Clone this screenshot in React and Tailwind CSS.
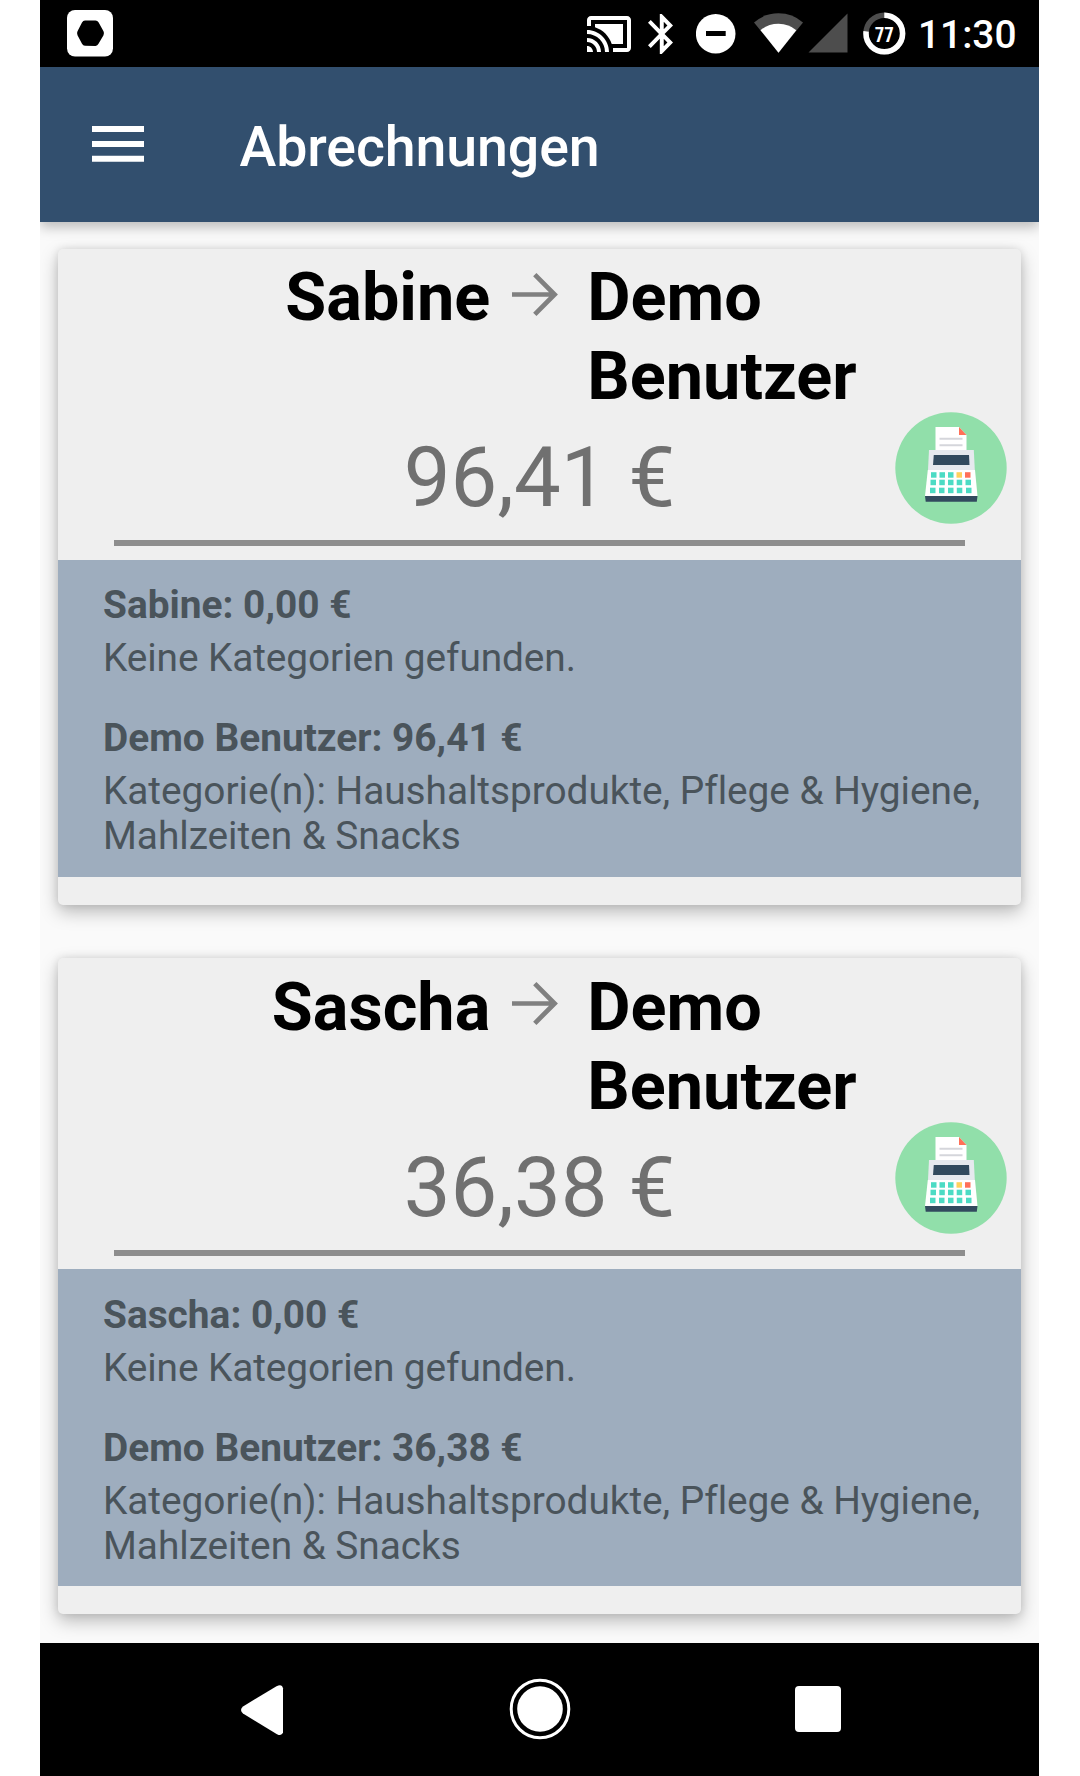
import React from "react";

const settlements = [
  { from: "Sabine", to: "Demo Benutzer", amount: "96,41 €" },
  { from: "Sascha", to: "Demo Benutzer", amount: "36,38 €" },
];

function StatusBar() {
  return (
    <div className="flex h-[66.5px] shrink-0 items-start bg-black">
      <svg className="mt-[10px] ml-[27px] h-[47px] w-[46px]" viewBox="0 0 46 47">
        <rect width="46" height="46.5" rx="8" fill="#fff" />
        <path d="M18 10.500h10.500q2 0 3 1.700l5 9q1 2 0 4l-5 8.500q-1 2-3 2.200l-10.500-.2q-2 0-3-2l-4.500-8.500q-1-2 0-4l4.500-8.800q1-1.900 3-1.900z" fill="#000" />
      </svg>
      <svg className="mt-[12px] ml-[471.5px] h-[44px] w-[48px]" viewBox="0 0 24 22" fill="#fff">
        <path d="M21 2H3c-1.100 0-2 .9-2 2v3h2V4h18v14h-7v2h7c1.100 0 2-.9 2-2V4c0-1.100-.9-2-2-2zM1 17v3h3c0-1.660-1.340-3-3-3zm0-4v2c2.760 0 5 2.240 5 5h2c0-3.870-3.130-7-7-7zm0-4v2c4.970 0 9 4.030 9 9h2c0-6.080-4.930-11-11-11z" />
        <path d="M5 6v1.630c3.960 1.280 7.090 4.410 8.370 8.370H19V6z" />
      </svg>
      <svg className="mt-[14px] ml-[15.5px] h-[40px] w-[25px]" viewBox="5 2 12.710 20" preserveAspectRatio="none" fill="#fff">
        <path d="M17.710 7.710L12 2h-1v7.590L6.410 5 5 6.410 10.590 12 5 17.590 6.410 19 11 14.410V22h1l5.710-5.710-4.300-4.290 4.300-4.290zM13 5.830l1.880 1.880L13 9.590V5.830zm1.880 10.460L13 18.170v-3.760l1.880 1.880z" />
      </svg>
      <svg className="mt-[14px] ml-[23px] h-[40px] w-[40px]" viewBox="0 0 40 40">
        <circle cx="19.700" cy="19.800" r="19.800" fill="#fff" />
        <path d="M10 17h19.700v5H10z" fill="#000" />
      </svg>
      <svg className="mt-[13px] ml-[18px] h-[40px] w-[49px]" viewBox="0 0 49 40">
        <path d="M0 9.500Q10.500 .3 24.500 .3T49 9.500L24.500 39.700z" fill="#4d4d4d" />
        <path d="M6.500 17.200Q14 10.700 24.500 10.700T42.300 17.200L24.500 39.700z" fill="#fff" />
      </svg>
      <svg className="mt-[13px] ml-[4.5px] h-[40px] w-[40px]" viewBox="0 0 40 40">
        <path d="M39.500 .5v39H.5z" fill="#4d4d4d" />
      </svg>
      <svg className="mt-[12px] ml-[15.5px] h-[43px] w-[43px]" viewBox="0 0 43 43">
        <circle cx="21.300" cy="21.500" r="18.300" fill="none" stroke="#4d4d4d" strokeWidth="5.500" />
        <circle cx="21.300" cy="21.500" r="18.300" fill="none" stroke="#fff" strokeWidth="5.500" pathLength="100" strokeDasharray="77 23" transform="rotate(-90 21.300 21.500)" />
        <text x="21.300" y="29.500" textAnchor="middle" fontSize="20" fontWeight="700" fill="#fff" textLength="19" lengthAdjust="spacingAndGlyphs" fontFamily="Roboto Condensed, Roboto, sans-serif">77</text>
      </svg>
      <span className="mt-[12px] ml-[12px] text-[38.85px] leading-[45px] font-medium text-white">11:30</span>
    </div>
  );
}

function Calculator() {
  const rows = [
    { y: 60.200, xs: [36, 44.500, 53, 61.500, 70] },
    { y: 67.700, xs: [35.500, 44.300, 53, 61.700, 70.500] },
    { y: 75.700, xs: [35, 44, 53, 61.800, 71] },
  ];
  return (
    <svg className="absolute top-[163.2px] right-[13.5px] h-[112px] w-[112px]" viewBox="0 0 112 112">
      <circle cx="56" cy="56" r="55.700" fill="#91dfaa" />
      <path d="M40.500 15H64l7.500 8v17h-31z" fill="#fff" />
      <path d="M64 15l7.500 8H64z" fill="#ff7058" />
      <path d="M44.500 26.800h23M44.500 33.200h23" stroke="#d5d6db" strokeWidth="2" />
      <path d="M34 38h44.800l1 20H33z" fill="#e6e9ee" />
      <path d="M38.800 43h35.200l.5 10H38z" fill="#324a5e" />
      <path d="M32.800 58h47.200l2.500 26H30z" fill="#fff" />
      <path d="M30 84h52.500l-.7 5.700H30.700z" fill="#324a5e" />
      {rows.map((row, r) =>
        row.xs.map((x, c) => (
          <rect
            key={`${r}-${c}`}
            x={x}
            y={row.y}
            width="5.500"
            height="5.500"
            fill={r === 0 && c === 3 ? "#ffd15c" : r === 0 && c === 4 ? "#ff7058" : "#4cdbc4"}
          />
        ))
      )}
    </svg>
  );
}

function SettlementCard({ from, to, amount }) {
  return (
    <section className="relative h-[655.5px] shrink-0 rounded-[5px] bg-[#efefef] shadow-[0_7px_18px_rgba(0,0,0,0.26),0_0_8px_rgba(0,0,0,0.1)]">
      <div className="h-[310.5px] pt-[9.2px]">
        <div className="flex h-[158px] text-[66.6px] leading-[79px] font-bold text-black">
          <div className="w-[432px] text-right">{from}</div>
          <svg className="mt-[10.8px] ml-[22px] h-[50px] w-[48px] shrink-0" viewBox="0 0 48 50" fill="none" stroke="#808080" strokeWidth="4.700">
            <path d="M0 25.500h42.500M22.800 5.700l19.800 19.800-19.800 19.800" />
          </svg>
          <div className="ml-[27px] w-[300px]">{to}</div>
        </div>
        <div className="mt-[13px] text-center text-[83.25px] leading-[98px] tracking-[0.1px] text-[#707070]">{amount}</div>
        <div className="mt-[13px] mr-[55.5px] ml-[55.7px] h-[6px] bg-[#8d8d8d]" />
      </div>
      <div className="h-[317.5px] bg-[#9eadbe] pt-[22.7px] pl-[44.7px] text-[38.85px] leading-[45px] text-[#4a545b]">
        <p className="font-bold">{from}: 0,00 €</p>
        <p className="mt-[8px] tracking-[-0.1px]">Keine Kategorien gefunden.</p>
        <p className="mt-[35px] font-bold">{to}: {amount}</p>
        <p className="mt-[8px] tracking-[-0.05px] [font-variant-ligatures:common-ligatures]">
          Kategorie(n): Haushaltsprodukte, Pflege &amp; Hygiene,
          <br />
          Mahlzeiten &amp; Snacks
        </p>
      </div>
      <Calculator />
    </section>
  );
}

export default function App() {
  return (
    <div className="h-[1776px] w-[1080px] overflow-hidden bg-white pl-[40px] font-['Roboto',sans-serif]">
      <div className="flex h-full w-[999px] flex-col">
        <StatusBar />
        <header className="relative z-10 flex h-[155.5px] shrink-0 items-center bg-[#324f6e] shadow-[0_5px_12px_rgba(0,0,0,0.26)] [clip-path:inset(0_0_-30px_0)]">
          <svg className="-mt-[1px] ml-[51.8px] h-[36px] w-[52px]" viewBox="0 0 52 36">
            <path d="M0 0h52v6H0zM0 14.900h52v6H0zM0 29.800h52v6H0z" fill="#fff" />
          </svg>
          <h1 className="mt-[6px] ml-[95.7px] text-[55.5px] leading-[65px] font-medium tracking-[-0.1px] text-white">Abrechnungen</h1>
        </header>
        <main className="flex h-[1421px] shrink-0 flex-col gap-[53.9px] overflow-hidden bg-[#fafafa] px-[18.3px] pt-[27px]">
          {settlements.map((s) => (
            <SettlementCard key={s.from} {...s} />
          ))}
        </main>
        <nav className="flex flex-1 items-start bg-black">
          <svg className="mt-[41px] ml-[200px] h-[52px] w-[44px]" viewBox="0 0 44 52">
            <path d="M3 22.500L36.500 2.200q5.500-2.700 6.500 2v44q-1 4.500-6 2L3 29.500q-4-3.500 0-7z" fill="#fff" />
          </svg>
          <svg className="mt-[35px] ml-[224.5px] h-[62px] w-[62px]" viewBox="0 0 62 62">
            <circle cx="31" cy="31" r="28.800" fill="none" stroke="#fff" strokeWidth="3" />
            <circle cx="31" cy="31" r="22.800" fill="#fff" />
          </svg>
          <div className="mt-[43.3px] ml-[224px] h-[46px] w-[46px] rounded-[4px] bg-white" />
        </nav>
      </div>
    </div>
  );
}
